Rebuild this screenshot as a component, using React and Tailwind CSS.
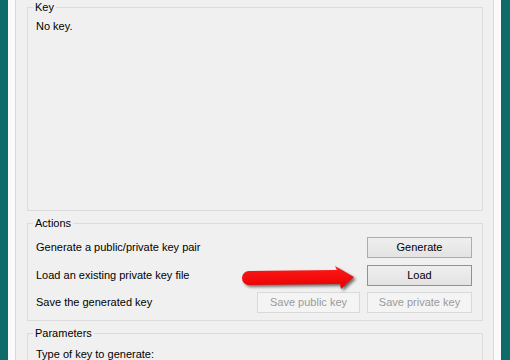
export default function App() {
  const btn =
    "h-[21px] flex items-center justify-center border bg-gradient-to-b from-[#efefef] to-[#e3e3e3] text-black";
  const disabled =
    "h-[21px] flex items-center justify-center border border-[#d9d9d9] bg-[#f4f4f4] text-[#9a9a9a]";
  const label = "absolute left-[5px] -top-[7px] px-[2px] bg-[#f0f0f0]";
  return (
    <div className="w-[510px] h-[360px] overflow-hidden flex font-['Liberation_Sans',Arial,sans-serif] text-[11px] leading-[13px] text-black">
      <div className="w-[8px] bg-[#0f6b69]" />
      <div className="w-[7px] bg-[#fafafa]" />
      <div className="w-[1px] bg-[#d9d9d9]" />
      <div className="relative w-[477px] bg-[#f0f0f0] pl-[11px] pr-[10px] pt-[7px] flex flex-col">
        <div className="relative h-[204px] shrink-0 border border-[#dcdcdc]">
          <div className={label}>Key</div>
          <div className="pl-[8px] pt-[12px]">No key.</div>
        </div>
        <div className="relative mt-[12px] shrink-0 border border-[#dcdcdc] pt-[13px] pb-[7px] pl-[8px] pr-[10px]">
          <div className={label + " -top-[6px]"}>Actions</div>
          <div className="flex items-center justify-between h-[21px]">
            <span>Generate a public/private key pair</span>
            <div className={btn + " w-[105px] border-[#adadad]"}>Generate</div>
          </div>
          <div className="flex items-center justify-between h-[21px] mt-[7px]">
            <span>Load an existing private key file</span>
            <div className={btn + " w-[105px] border-[#5a9fe4]"}>Load</div>
          </div>
          <div className="flex items-center justify-between h-[21px] mt-[6px]">
            <span>Save the generated key</span>
            <div className="flex gap-[7px]">
              <div className={disabled + " w-[103px]"}>Save public key</div>
              <div className={disabled + " w-[105px]"}>Save private key</div>
            </div>
          </div>
        </div>
        <div className="relative mt-[12px] shrink-0 h-[60px] border border-[#dcdcdc] pl-[8px] pt-[14px]">
          <div className={label + " -top-[6px]"}>Parameters</div>
          <div>Type of key to generate:</div>
        </div>
        <svg
          className="absolute left-[220px] top-[258px]"
          width="130"
          height="36"
          viewBox="0 0 130 36"
        >
          <defs>
            <filter id="sh" x="-20%" y="-50%" width="140%" height="200%">
              <feGaussianBlur stdDeviation="1.5" />
            </filter>
            <linearGradient id="rg" x1="0" y1="0" x2="0" y2="1">
              <stop offset="0" stopColor="#ff1a1a" />
              <stop offset="1" stopColor="#e80000" />
            </linearGradient>
          </defs>
          <path
            d="M 15 15 L 103 14 L 101 10 L 120 21 L 107 33 L 106 28 L 15 29 A 7 7 0 0 1 15 15 Z"
            fill="#000"
            opacity="0.55"
            filter="url(#sh)"
          />
          <path
            d="M 13 13 L 101 12 L 99 8 L 118 19 L 105 31 L 104 26 L 13 27 A 7 7 0 0 1 13 13 Z"
            fill="url(#rg)"
          />
        </svg>
      </div>
      <div className="w-[1px] bg-[#d9d9d9]" />
      <div className="w-[7px] bg-[#fafafa]" />
      <div className="w-[9px] bg-[#0f6b69]" />
    </div>
  );
}
